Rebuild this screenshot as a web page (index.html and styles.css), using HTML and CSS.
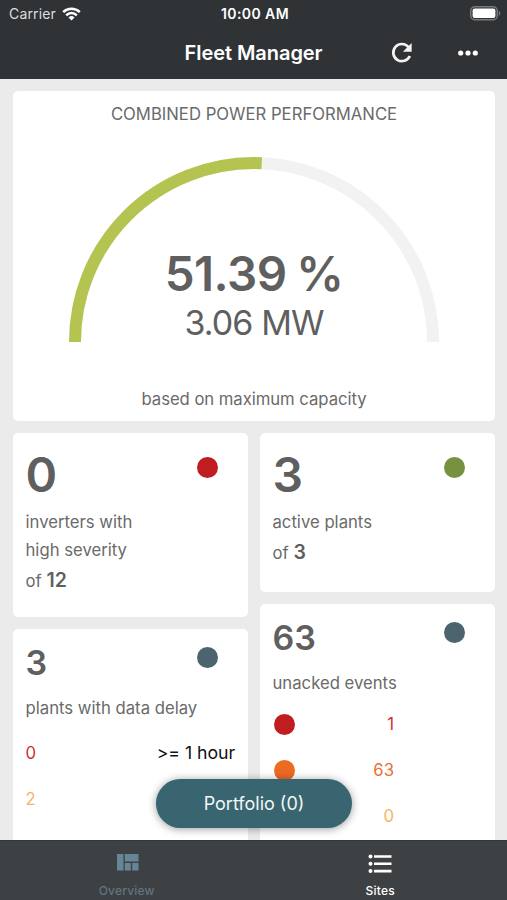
FILE: index.html
```html
<!DOCTYPE html>
<html lang="en">
<head>
  <meta charset="utf-8">
  <title>Fleet Manager</title>
  <link rel="stylesheet" href="styles.css">
</head>
<body>
  <header class="header">
    <div class="status">
      <div class="carrier">
        <span>Carrier</span>
        <svg width="19" height="14" viewBox="0 0 19 14" fill="none" stroke="#fff" stroke-width="2.5">
          <path d="M1.2 5.1a11.8 11.8 0 0 1 16.6 0M4.2 8.3a7.5 7.5 0 0 1 10.6 0"/>
          <path d="M9.5 13.6 6.5 10.5a4.4 4.4 0 0 1 6 0z" fill="#fff" stroke="none"/>
        </svg>
      </div>
      <span class="time">10:00 AM</span>
      <svg class="battery" width="31" height="15" viewBox="0 0 31 15">
        <rect x=".75" y=".75" width="26.5" height="13" rx="4" fill="none" stroke="#77797b" stroke-width="1.5"/>
        <rect x="2.6" y="2.6" width="22.8" height="9.3" rx="2" fill="#fff"/>
        <path d="M28.8 5c2 .9 2 4 0 4.8z" fill="#77797b"/>
      </svg>
    </div>
    <div class="navbar">
      <h1>Fleet Manager</h1>
      <div class="actions">
        <svg width="22" height="22" viewBox="0 0 22 22" fill="none" stroke="#f4f4f4" stroke-width="2.7">
          <path d="M17.6 5.2A8.6 8.6 0 1 0 18.8 14"/>
          <path d="M20.6 1v8.7h-8.7z" fill="#f4f4f4" stroke="none"/>
        </svg>
        <svg width="20" height="6" viewBox="0 0 20 6" fill="#fff">
          <circle cx="2.7" cy="3" r="2.6"/>
          <circle cx="10" cy="3" r="2.6"/>
          <circle cx="17.3" cy="3" r="2.6"/>
        </svg>
      </div>
    </div>
  </header>

  <main class="content">
    <section class="card power">
      <h2>COMBINED POWER PERFORMANCE</h2>
      <div class="gauge">
        <svg width="370" height="185" viewBox="0 0 370 185" fill="none" stroke-width="12">
          <path d="M6 185a179 179 0 0 1 358 0" stroke="#f2f2f2"/>
          <path d="M6 185a179 179 0 0 1 358 0" stroke="#b5c451" pathLength="100" stroke-dasharray="51.39 100"/>
        </svg>
        <div class="reading">
          <div class="percent">51.39 %</div>
          <div class="megawatt">3.06 MW</div>
        </div>
      </div>
      <p class="note">based on maximum capacity</p>
    </section>

    <div class="columns">
      <div class="column">
        <section class="card inverters">
          <div class="top"><span class="big">0</span><i class="dot red"></i></div>
          <p>inverters with<br>high severity</p>
          <p class="total">of <b>12</b></p>
        </section>
        <section class="card small delays">
          <div class="top"><span class="big">3</span><i class="dot slate"></i></div>
          <p>plants with data delay</p>
          <div class="row"><span class="c-red">0</span><span class="range">&gt;= 1 hour</span></div>
          <div class="row"><span class="c-yellow">2</span></div>
        </section>
      </div>
      <div class="column">
        <section class="card plants">
          <div class="top"><span class="big">3</span><i class="dot green"></i></div>
          <p>active plants</p>
          <p class="total">of <b>3</b></p>
        </section>
        <section class="card small events">
          <div class="top"><span class="big">63</span><i class="dot slate"></i></div>
          <p>unacked events</p>
          <div class="row"><i class="dot red"></i><span class="c-red">1</span></div>
          <div class="row"><i class="dot orange"></i><span class="c-orange">63</span></div>
          <div class="row"><i class="dot"></i><span class="c-yellow">0</span></div>
        </section>
      </div>
    </div>
  </main>

  <button class="portfolio">Portfolio (0)</button>

  <nav class="tabs">
    <a class="tab inactive">
      <svg width="22" height="17" viewBox="0 0 22 17" fill="#668595">
        <path d="M0 0h6.5v16.5H0zM7.8 0h13.7v7.5H7.8zM7.8 8.9h6v7.6h-6zM15.2 8.9h6.3v7.6h-6.3z"/>
      </svg>
      <span>Overview</span>
    </a>
    <a class="tab">
      <svg width="24" height="20" viewBox="0 0 24 20" fill="#fff">
        <circle cx="2.5" cy="2.5" r="2"/>
        <circle cx="2.5" cy="9.8" r="2"/>
        <circle cx="2.5" cy="17.1" r="2"/>
        <path d="M6 1.2h17.5v2.6H6zM6 8.5h17.5v2.6H6zM6 15.8h17.5v2.6H6z"/>
      </svg>
      <span>Sites</span>
    </a>
  </nav>
</body>
</html>
```
FILE: styles.css
```css
* {
  box-sizing: border-box;
}
body {
  margin: 0;
  height: 900px;
  display: flex;
  flex-direction: column;
  overflow: hidden;
  position: relative;
  background: #ebebeb;
  color: #6a6a6a;
  font-family: Inter, "Liberation Sans", sans-serif;
  font-size: 16.7px;
}
h1, h2, p {
  margin: 0;
  font-weight: 400;
}
svg {
  display: block;
}
.header {
  height: 79px;
  flex: none;
  background: #2f3336;
  color: #fff;
}
.status {
  height: 27px;
  padding: 0 6px 0 9px;
  display: grid;
  grid-template-columns: 1fr auto 1fr;
  align-items: center;
  font-size: 14px;
}
.carrier {
  display: flex;
  align-items: center;
  gap: 6px;
  color: #dedfdf;
  letter-spacing: 0.15px;
}
.time {
  font-weight: 600;
  font-size: 14px;
  letter-spacing: 0.4px;
}
.battery {
  justify-self: end;
}
.navbar {
  height: 51px;
  display: grid;
  grid-template-columns: 1fr auto 1fr;
  align-items: center;
}
.navbar h1 {
  grid-column: 2;
  font-size: 20px;
  font-weight: 600;
  letter-spacing: -0.05px;
}
.actions {
  display: flex;
  align-items: center;
  justify-content: flex-end;
  gap: 45px;
  padding-right: 29px;
}
.content {
  flex: 1;
  min-height: 0;
  overflow: hidden;
  padding: 12px 12px 0 13px;
}
.card {
  background: #fff;
  border-radius: 5px;
}
.power {
  height: 330px;
  display: flex;
  flex-direction: column;
  align-items: center;
}
.power h2 {
  margin-top: 12px;
  font-size: 16.7px;
  line-height: 22px;
}
.gauge {
  margin-top: 32px;
  display: grid;
}
.gauge > * {
  grid-area: 1 / 1;
}
.reading {
  padding-top: 86px;
  text-align: center;
  color: #5f5f5f;
}
.percent {
  font-size: 47.5px;
  font-weight: 600;
  line-height: 61px;
  letter-spacing: -0.5px;
  word-spacing: -2px;
}
.megawatt {
  font-size: 34px;
  line-height: 37px;
  letter-spacing: -0.9px;
}
.note {
  margin-top: 46px;
  line-height: 22px;
  letter-spacing: -0.05px;
}
.columns {
  display: grid;
  grid-template-columns: 235px 235px;
  gap: 12px;
  margin-top: 12px;
}
.column {
  display: flex;
  flex-direction: column;
  gap: 12px;
}
.column .card {
  padding: 0 12px 0 12.5px;
  line-height: 28px;
}
.column .inverters {
  height: 184px;
}
.column .plants {
  height: 159px;
}
.top {
  display: flex;
  justify-content: space-between;
  padding: 24px 18.5px 0 0;
  height: 75px;
}
.big {
  font-size: 48px;
  font-weight: 600;
  line-height: 36px;
  color: #5f5f5f;
}
.total {
  padding-top: 2px;
}
.total b {
  font-size: 19.5px;
  font-weight: 600;
  color: #5f5f5f;
}
.small .top {
  padding-top: 18px;
  height: 65px;
}
.small .big {
  font-size: 34px;
  line-height: 31px;
}
.dot {
  width: 21px;
  height: 21px;
  border-radius: 50%;
  flex: none;
}
.red {
  background: #bf1d1f;
}
.green {
  background: #78913f;
}
.slate {
  background: #4c646d;
}
.orange {
  background: #ed6a23;
}
.row {
  height: 46px;
  display: flex;
  align-items: center;
  justify-content: space-between;
}
.range {
  color: #111;
  font-size: 17.7px;
  letter-spacing: -0.05px;
}
.column .delays {
  height: 230px;
}
.delays p {
  padding-bottom: 8px;
}
.events p {
  padding-bottom: 4px;
}
.delays .row {
  padding-right: 1px;
}
.events .row {
  padding: 0 89px 0 1px;
}
.column .events {
  height: 260px;
}
.c-red {
  color: #c93038;
}
.c-orange {
  color: #e8703a;
}
.c-yellow {
  color: #f5b364;
}
.portfolio {
  position: absolute;
  left: 156px;
  top: 779px;
  width: 196px;
  height: 49px;
  border: none;
  border-radius: 25px;
  background: #38656f;
  color: #f2f7f7;
  font-family: inherit;
  font-size: 18px;
  box-shadow: 0 1px 9px rgba(0, 0, 0, 0.4);
}
.tabs {
  height: 60px;
  flex: none;
  display: grid;
  grid-template-columns: 1fr 1fr;
  background: #3d4143;
  border-top: 1px solid #343739;
}
.tab {
  display: flex;
  flex-direction: column;
  align-items: center;
  justify-content: space-between;
  padding: 13px 0 1px;
  color: #fff;
  font-size: 12px;
  font-weight: 500;
  line-height: 16px;
  letter-spacing: 0.2px;
}
.inactive {
  color: #627580;
}
.inactive svg {
  margin-left: 2px;
}
```
